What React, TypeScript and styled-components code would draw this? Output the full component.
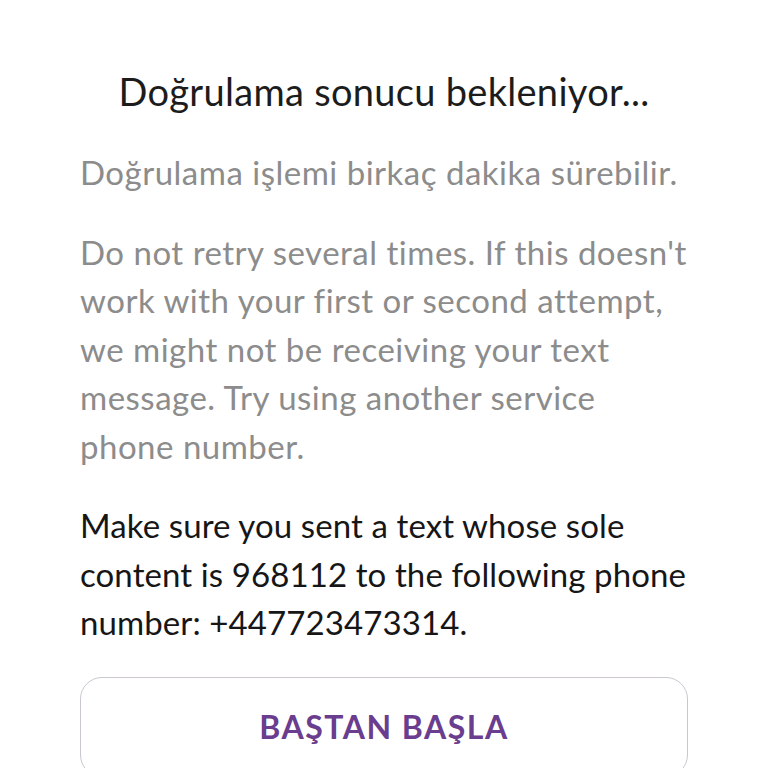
import styled, { createGlobalStyle } from "styled-components"

const GlobalStyle = createGlobalStyle`
  body {
    margin: 0;
    background: #ffffff;
    font-family: Lato, "Noto Sans", sans-serif;
  }
`

const Page = styled.main`
  width: 768px;
  height: 768px;
  overflow: hidden;
  box-sizing: border-box;
  padding: 67px 80px 0;
  display: flex;
  flex-direction: column;
`

const Title = styled.h1`
  margin: 0;
  text-align: center;
  font-weight: 400;
  font-size: 38px;
  letter-spacing: 0.3px;
  line-height: 48px;
  color: #1c1c1c;
`

const Text = styled.p<{ $muted?: boolean }>`
  margin: 0 ${(p) => (p.$muted ? "0" : "-12px")} 0 0;
  font-size: 33px;
  letter-spacing: ${(p) => (p.$muted ? "0.5px" : "0.1px")};
  line-height: 48.5px;
  color: ${(p) => (p.$muted ? "#8c8c8c" : "#161616")};
`

const Stack = styled.section`
  margin-top: 33px;
  display: flex;
  flex-direction: column;
  gap: 31px;
`

const RestartButton = styled.button`
  margin-top: 30px;
  width: 100%;
  height: 100px;
  flex-shrink: 0;
  border: 1.5px solid #cbc6d0;
  border-radius: 22px;
  background: #ffffff;
  color: #6a3d8e;
  font-family: Lato, "Noto Sans", sans-serif;
  font-weight: 700;
  font-size: 32px;
  letter-spacing: 1.5px;
  padding: 0;
`

function App() {
  return (
    <>
      <GlobalStyle />
      <Page>
        <Title>Doğrulama sonucu bekleniyor...</Title>
        <Stack>
          <Text $muted>Doğrulama işlemi birkaç dakika sürebilir.</Text>
          <Text $muted>
            Do not retry several times. If this doesn't work with your first or
            second attempt, we might not be receiving your text message. Try using
            another service phone number.
          </Text>
          <Text>
            Make sure you sent a text whose sole content is 968112 to the following
            phone number: +447723473314.
          </Text>
        </Stack>
        <RestartButton>BAŞTAN BAŞLA</RestartButton>
      </Page>
    </>
  )
}

export default App
